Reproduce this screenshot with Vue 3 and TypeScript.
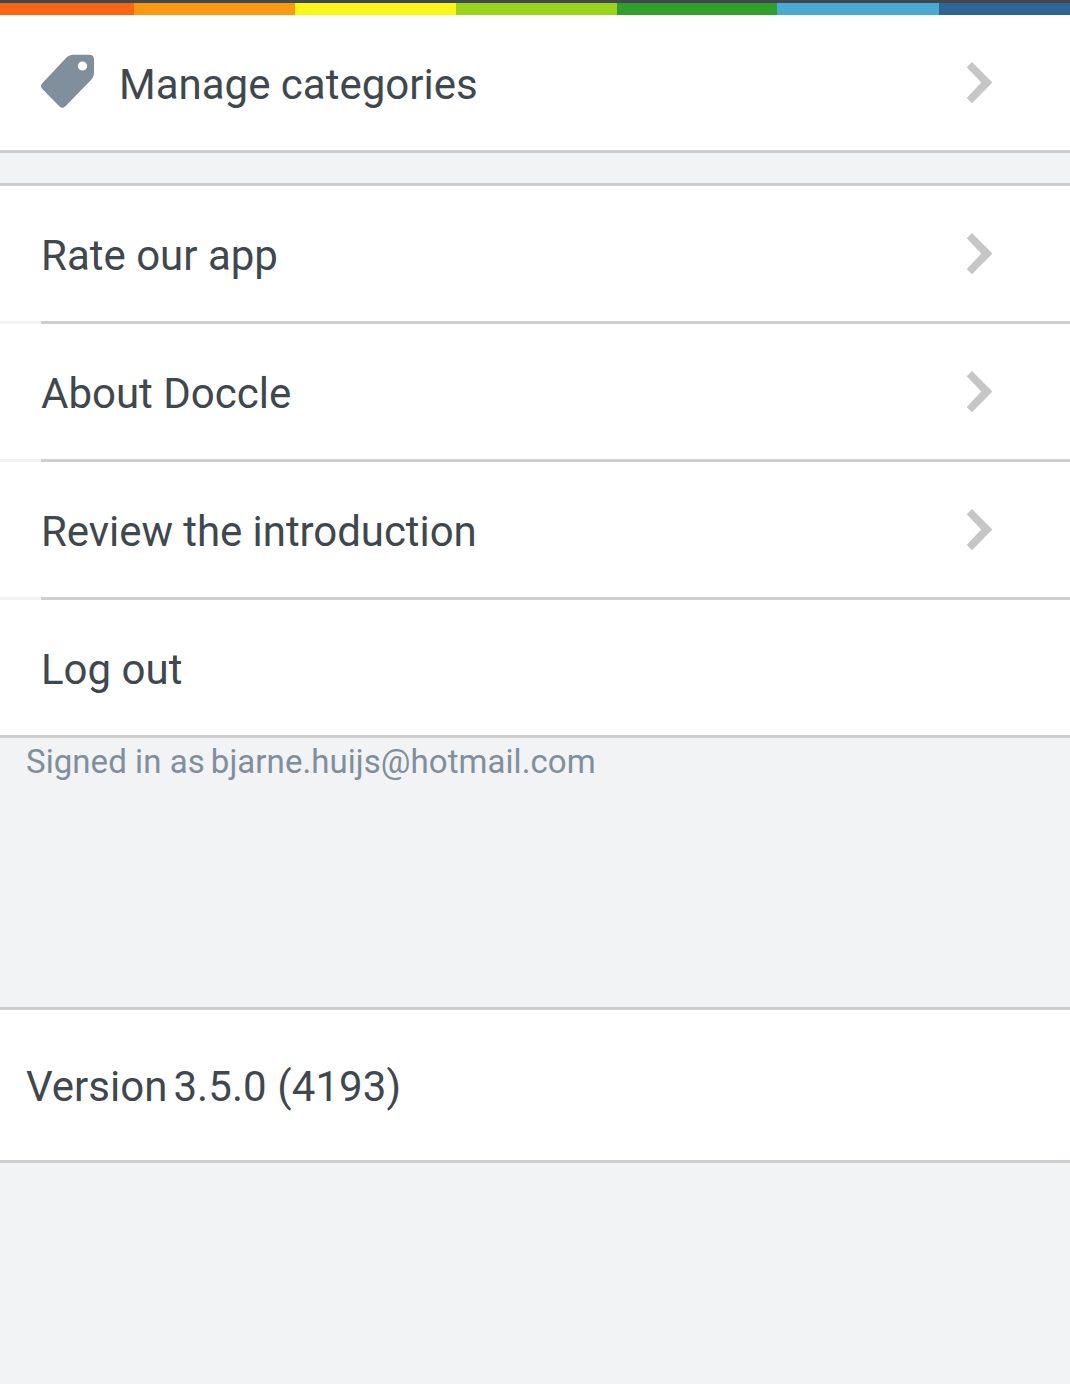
<script setup lang="ts">
interface MenuItem {
  label: string
  arrow: boolean
}

const items: MenuItem[] = [
  { label: 'Rate our app', arrow: true },
  { label: 'About Doccle', arrow: true },
  { label: 'Review the introduction', arrow: true },
  { label: 'Log out', arrow: false },
]
const stripes: string[] = ['orange', 'amber', 'yellow', 'lime', 'green', 'sky', 'blue']
const chevron = 'M6 0L26.400 20.600L6 41.200L.7 35.900L15.200 20.600L.7 5.300Z'
</script>

<template>
  <main class="page">
    <div class="rainbow">
      <i v-for="s in stripes" :key="s" :class="s"></i>
    </div>
    <section class="row categories">
      <svg class="tag" viewBox="0 0 54 54" width="54" height="54">
        <path fill-rule="evenodd" d="M32 .8H48.500Q53 .8 53 5.500V18.500Q53 23 49.500 26.500L24.500 52.200Q21.500 55.300 18.300 52.200L1.300 35Q-1.300 32 1.300 29.200L24.500 4.500Q28 .8 32 .8ZM41.500 7.400a4.600 4.600 0 1 0 0 9.200a4.600 4.600 0 1 0 0-9.200Z" fill="#808f9b" />
      </svg>
      <span class="label">Manage categories</span>
      <svg class="chevron" viewBox="0 0 27 42" width="27" height="42"><path :d="chevron" /></svg>
    </section>
    <section class="menu">
      <div v-for="item in items" :key="item.label" class="row item">
        <span class="label">{{ item.label }}</span>
        <svg v-if="item.arrow" class="chevron" viewBox="0 0 27 42" width="27" height="42"><path :d="chevron" /></svg>
      </div>
    </section>
    <p class="account"><span>Signed in as</span><span>bjarne.huijs@hotmail.com</span></p>
    <section class="version"><span>Version</span><span class="number">3.5.0 (4193)</span></section>
  </main>
</template>

<style>
body { margin: 0; background: #f1f3f5; }
</style>
<style scoped>
.page { box-sizing: border-box; height: 1384px; background: #f1f3f5; color: #3f484f; font: 42px/50px Roboto, sans-serif; overflow: hidden; }
.rainbow { box-sizing: border-box; height: 15px; border-top: 3px solid #3f484f; display: grid; grid-template-columns: 134px 161px 161px 161px 160px 162px 131px; }
.orange { background: #fb6611; }
.amber { background: #fa990f; }
.yellow { background: #f9f618; }
.lime { background: #99d31b; }
.green { background: #309f2c; }
.sky { background: #4aaad4; }
.blue { background: #2e6596; }
.row { box-sizing: border-box; display: flex; align-items: center; padding: 0 77px 0 41px; background: #fff; }
.categories { height: 138px; border-bottom: 3px solid #cecece; }
.tag { margin: -3px 24px 0 0; }
.label { margin-top: 4px; }
.item:nth-child(3) .label { letter-spacing: -0.06px; }
.chevron { margin-left: auto; fill: #c6c6c6; }
.menu { margin-top: 30px; border-top: 3px solid #cecece; }
.item { height: 138px; padding-bottom: 3px; background: linear-gradient(90deg, #f1f3f5 41px, #cecece 41px) bottom / 100% 3px no-repeat #fff; }
.item:last-child { background: linear-gradient(#cecece, #cecece) bottom / 100% 3px no-repeat #fff; }
.account { margin: 4px 0 0 26px; height: 40px; display: flex; gap: 6px; font-size: 33px; line-height: 40px; letter-spacing: 0.06px; color: #808f9b; }
.version { box-sizing: border-box; height: 156px; margin-top: 225px; padding: 4px 26px 0; border-top: 3px solid #cecece; border-bottom: 3px solid #cecece; display: flex; align-items: center; gap: 6px; background: #fff; }
.number { letter-spacing: 0.08px; }
</style>
